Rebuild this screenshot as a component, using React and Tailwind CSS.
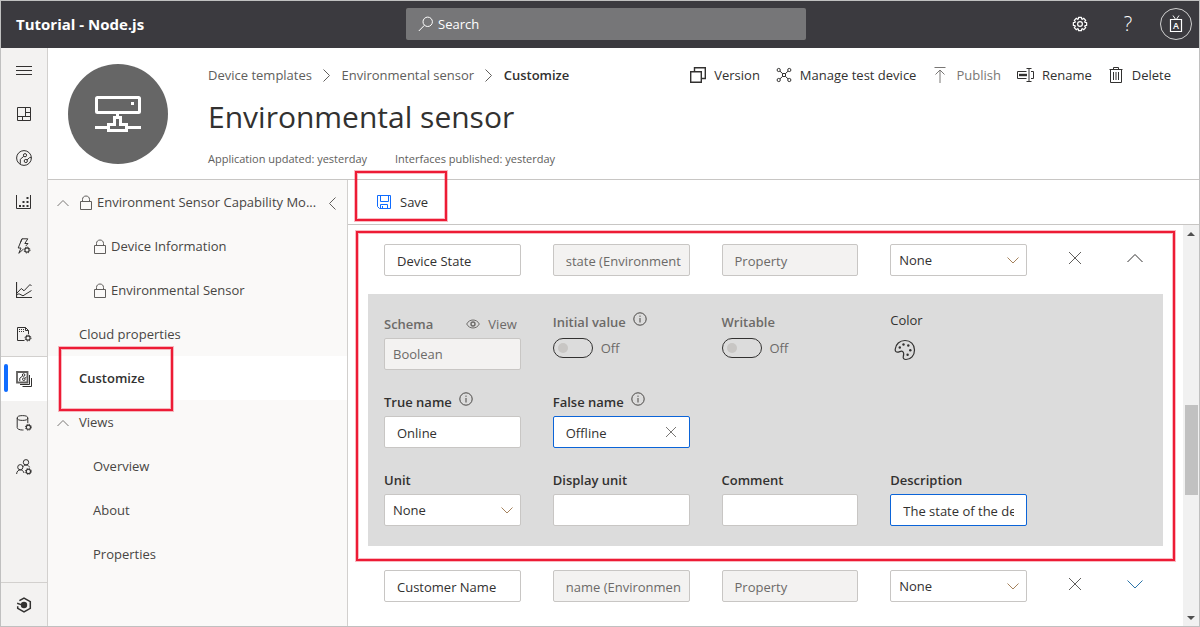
import React from "react";

function Icon({ size = 16, width, className = "", children, sw = 1 }) {
  const w = width || size;
  return (
    <svg
      width={w}
      height={size}
      viewBox={`0 0 ${w} ${size}`}
      fill="none"
      stroke="currentColor"
      strokeWidth={sw}
      className={`shrink-0 ${className}`}
      aria-hidden="true"
    >
      {children}
    </svg>
  );
}

function MiniGear({ x, y }) {
  return (
    <g>
      <circle cx={x} cy={y} r="3" strokeDasharray="1.2 1.156" strokeWidth="1" />
      <circle cx={x} cy={y} r="2.1" strokeWidth="1.1" />
    </g>
  );
}

const MenuIcon = () => (
  <Icon>
    <path d="M0 4.5H16M0 8.5H16M0 12.5H16" />
  </Icon>
);
const DashboardIcon = () => (
  <Icon>
    <path d="M1.5 1.5H14.5V14.5H1.5ZM9.5 1.5V10M1.5 10.5H14.5M10 6.5H14.5M6.5 10.5V14.5" />
  </Icon>
);
const DevicesIcon = () => (
  <Icon>
    <circle cx="8" cy="8" r="7.4" />
    <circle cx="9" cy="5.2" r="1.6" />
    <circle cx="9.8" cy="11" r="1.6" />
    <path d="M7.8 6.3L4.3 9.3V13.8M11 9.9L13.6 7.6H15.2" />
  </Icon>
);
const GroupsIcon = () => (
  <Icon>
    <path d="M0.5 1V14.5H14.5V1" />
    <path
      d="M3 11h2v2h-2zM6.5 11h2v2h-2zM10.5 11h2v2h-2zM6.5 7h2v2h-2zM10.5 7h2v2h-2zM10.5 3h2v2h-2z"
      fill="currentColor"
      stroke="none"
    />
  </Icon>
);
const RulesIcon = () => (
  <Icon>
    <path d="M7.3 11.2L2.8 15.3L5 10H2.2L6 0.8H11.8L8.8 5.5H12L9.8 8M6 0.8L4.2 5.2" />
    <MiniGear x={11} y={12} />
  </Icon>
);
const AnalyticsIcon = () => (
  <Icon>
    <path d="M0.5 0V15.5H16" strokeWidth="1.2" />
    <path d="M1 11L5.3 6.5L8 8.8L14 2.5L15.5 4M1 12.5L3 11.8L7 13.8L15.5 8.5" />
  </Icon>
);
const JobsIcon = () => (
  <Icon>
    <path d="M8.5 14.5H1.5V1.5H9.5L12.5 4.5V8M9.5 1.5V4.5H12.5" />
    <path d="M3 3.5H8M3 5.5H8" strokeDasharray="1 1" />
    <MiniGear x={12} y={12} />
  </Icon>
);
const TemplatesIcon = () => (
  <Icon>
    <path d="M1 1H11.5V11.5H1Z" strokeWidth="1.8" className="text-[#605e5c]" stroke="currentColor" />
    <circle cx="7.6" cy="4" r="1.3" />
    <circle cx="7.8" cy="8.2" r="1.3" />
    <path d="M6.6 5L3.8 7.2V10M8.8 7.3L10.5 6" />
    <path d="M13.5 4V13.5H4M15.5 7V15.5H6.5" />
  </Icon>
);
const ExportIcon = () => (
  <Icon>
    <ellipse cx="6.5" cy="3" rx="5.3" ry="2.4" />
    <path d="M1.2 3V12.6C1.2 14 3.4 15 6.5 15H7.5M11.8 3V8" />
    <MiniGear x={12.4} y={12.2} />
  </Icon>
);
const AdminIcon = () => (
  <Icon>
    <circle cx="10" cy="3.3" r="2.7" />
    <circle cx="4.3" cy="8.2" r="2.6" />
    <path d="M0.6 15C0.8 12.4 2.3 10.9 4.3 10.9C6.3 10.9 7.6 12.2 8 14M6.8 7.8C7.6 6.7 8.7 6 10 6C12 6 13 7 13.6 8.4" />
    <MiniGear x={12.4} y={12.4} />
  </Icon>
);
const CentralIcon = () => (
  <Icon sw={1.5}>
    <circle cx="8" cy="8" r="3.2" fill="currentColor" stroke="none" />
    <path d="M1.7 9.2V11.4L8 15L14.3 11.4V4.6L8 1L3.4 3.6M1.2 6.2L5 7.6" />
  </Icon>
);

function Chevron({ dir = "down", className = "", w = 12 }) {
  const paths = {
    down: `M0.5 0.5L${w / 2} ${w / 2}L${w - 0.5} 0.5`,
    up: `M0.5 ${w / 2}L${w / 2} 0.5L${w - 0.5} ${w / 2}`,
    right: `M0.5 0.5L${w / 2} ${w / 2}L0.5 ${w - 0.5}`,
    left: `M${w / 2} 0.5L0.5 ${w / 2}L${w / 2} ${w - 0.5}`,
  };
  const flat = dir === "down" || dir === "up";
  return (
    <Icon width={flat ? w : w / 2 + 1} size={flat ? w / 2 + 1 : w} className={className}>
      <path d={paths[dir]} />
    </Icon>
  );
}

const LockIcon = () => (
  <Icon width={12} size={16} className="text-[#605e5c]">
    <path d="M0.5 6.5H11.5V14.5H0.5ZM2.5 6.5V4.5C2.5 2.3 4 1 6 1C8 1 9.5 2.3 9.5 4.5V6.5" />
  </Icon>
);
const InfoIcon = () => (
  <Icon size={14} className="text-[#484644]">
    <circle cx="7" cy="7" r="6.2" />
    <path d="M7 6V10.5M7 3.6V4.8" />
  </Icon>
);
const CrossIcon = ({ size = 14, className = "" }) => (
  <Icon size={size} className={className}>
    <path d={`M1 1L${size - 1} ${size - 1}M${size - 1} 1L1 ${size - 1}`} />
  </Icon>
);
const GearIcon = () => {
  const teeth = [];
  const n = 8;
  for (let i = 0; i < n; i++) {
    const a = (i / n) * Math.PI * 2;
    const p = (r, d) => `${(8 + r * Math.cos(a + d)).toFixed(2)} ${(8 + r * Math.sin(a + d)).toFixed(2)}`;
    teeth.push(`${i ? "L" : "M"}${p(6.8, -0.22)}L${p(6.8, 0.22)}L${p(5.3, 0.3)}L${p(5.3, 0.48)}`);
  }
  return (
    <Icon sw={1.2}>
      <path d={teeth.join("") + "Z"} strokeLinejoin="round" />
      <circle cx="8" cy="8" r="2.4" />
    </Icon>
  );
};

const railItems = [
  ["Menu", MenuIcon],
  ["Dashboard", DashboardIcon],
  ["Devices", DevicesIcon],
  ["Device groups", GroupsIcon],
  ["Rules", RulesIcon],
  ["Analytics", AnalyticsIcon],
  ["Jobs", JobsIcon],
  ["Device templates", TemplatesIcon],
  ["Data export", ExportIcon],
  ["Administration", AdminIcon],
];

function TopBar() {
  return (
    <header className="flex h-[47px] shrink-0 items-center bg-[#3b3a3f] pb-px text-white">
      <div className="w-[405px] pl-[15px] text-[15px] font-bold leading-5">Tutorial - Node.js</div>
      <label className="flex h-8 w-[400px] items-center gap-1 rounded-xs bg-[#767678] px-3">
        <Icon size={16}>
          <circle cx="9.7" cy="5.8" r="4.7" />
          <path d="M6.4 9.3L0.8 15" />
        </Icon>
        <input
          aria-label="Search"
          placeholder="Search"
          className="min-w-0 flex-1 bg-transparent text-[13px] leading-5 outline-none placeholder:text-white"
        />
      </label>
      <div className="ml-auto flex items-center pr-[7px]">
        <button aria-label="Settings" className="flex w-12 justify-center">
          <GearIcon />
        </button>
        <button aria-label="Help" className="w-12 text-[20px] font-light leading-6">
          ?
        </button>
        <button
          aria-label="Account"
          className="ml-2 flex size-8 items-center justify-center rounded-full border border-[#d0d0d0]"
        >
          <svg width="14" height="18" viewBox="0 0 14 18" fill="none" stroke="currentColor" aria-hidden="true">
            <path d="M1.5 4.5H12.5V16.5H1.5Z" strokeWidth="1.2" />
            <path d="M4 0.5L7 5L10 0.5" />
            <text
              x="7"
              y="14"
              textAnchor="middle"
              fontSize="9"
              fontWeight="600"
              fill="currentColor"
              stroke="none"
            >
              A
            </text>
          </svg>
        </button>
      </div>
    </header>
  );
}

function Rail() {
  return (
    <nav aria-label="Main" className="flex w-[47px] shrink-0 flex-col border-r border-[#d2d0ce] bg-[#f3f2f1] text-[#323130]">
      {railItems.map(([name, Glyph]) => {
        const on = name === "Device templates";
        return (
          <button
            key={name}
            aria-label={name}
            className={
              on
                ? "relative flex h-[45px] items-center justify-center border-t border-[#d2d0ce] bg-white"
                : "flex h-11 items-center justify-center"
            }
          >
            {on && <span className="absolute left-[3px] top-[7px] h-7 w-1 rounded-sm bg-[#0f6cff]" />}
            <Glyph />
          </button>
        );
      })}
      <button aria-label="IoT Central" className="mt-auto flex h-11 items-center justify-center border-t border-[#d2d0ce]">
        <CentralIcon />
      </button>
    </nav>
  );
}

function Action({ icon, children, muted }) {
  return (
    <button
      disabled={muted}
      className={`flex items-center gap-2 whitespace-nowrap ${muted ? "text-[#797775]" : "text-[#323130]"}`}
    >
      {icon}
      {children}
    </button>
  );
}

function PageHeader() {
  return (
    <div className="flex h-[132px] shrink-0 border-b border-[#c8c6c4] pl-5 pr-7">
      <div className="mt-4 flex size-[100px] shrink-0 items-center justify-center rounded-full bg-[#666666] text-white">
        <svg width="46" height="36" viewBox="0 0 46 36" fill="none" stroke="currentColor" strokeWidth="3" aria-hidden="true">
          <rect x="1.5" y="1.5" width="43" height="15" rx="1" />
          <path d="M36 6h3v3h-3z" fill="currentColor" stroke="none" />
          <path d="M22.5 17V20M13.5 34.5V28.5H19.5V21.5H25.5V28.5H31.5V34.5Z" />
          <path d="M0 31.5H13M32 31.5H46" />
        </svg>
      </div>
      <div className="ml-10 min-w-0 flex-1">
        <div className="mt-[17px] flex items-center justify-between text-[13px] leading-5">
          <div className="flex items-center gap-[11px] whitespace-nowrap text-[#605e5c]">
            <a href="#templates">Device templates</a>
            <Chevron dir="right" w={13} />
            <a href="#sensor">Environmental sensor</a>
            <Chevron dir="right" w={13} />
            <span className="font-semibold text-[#323130]">Customize</span>
          </div>
          <div className="flex items-center gap-4">
            <Action
              icon={
                <Icon sw={1.4}>
                  <path d="M0.7 4.7H11.3V15.3H0.7ZM4.5 4V0.7H15.3V11.5H12" />
                </Icon>
              }
            >
              Version
            </Action>
            <Action
              icon={
                <Icon>
                  <circle cx="2.7" cy="3" r="1.6" />
                  <circle cx="13.3" cy="3" r="1.6" />
                  <circle cx="2.7" cy="13" r="1.6" />
                  <circle cx="13.3" cy="13" r="1.6" />
                  <path d="M4 4.2L6.5 6.5H9.5L12 4.2M4 11.8L6.5 9.5H9.5L12 11.8M6.5 6.5V9.5M9.5 6.5V9.5" />
                </Icon>
              }
            >
              Manage test device
            </Action>
            <Action
              muted
              icon={
                <Icon>
                  <path d="M2.5 0.5H13.5M8 3V16M3.5 7.5L8 3L12.5 7.5" />
                </Icon>
              }
            >
              Publish
            </Action>
            <Action
              icon={
                <Icon width={17}>
                  <path d="M9.5 4.5H0.5V11.5H9.5M14 4.5H16.5V11.5H14" />
                  <path d="M2 8H10" strokeWidth="2.4" />
                  <path d="M9.5 1.5H14.5M9.5 14.5H14.5M12 1.5V14.5" />
                </Icon>
              }
            >
              Rename
            </Action>
            <Action
              icon={
                <Icon>
                  <path d="M1.5 2.5H14.5M5.5 2.5V0.5H10.5V2.5M2.5 2.5V15.5H13.5V2.5" />
                  <path d="M5.5 5V13M8 5V13M10.5 5V13" />
                </Icon>
              }
            >
              Delete
            </Action>
          </div>
        </div>
        <h1 className="mt-3 text-[30px] leading-10 text-[#323130]">Environmental sensor</h1>
        <div className="mt-3 flex gap-7 text-[11px] leading-5 text-[#605e5c]">
          <span>Application updated: yesterday</span>
          <span>Interfaces published: yesterday</span>
        </div>
      </div>
    </div>
  );
}

const redBox = "border-2 border-[#ed1b35] shadow-[0_0_0_1px_rgba(237,27,53,0.3),inset_0_0_0_1px_rgba(237,27,53,0.3)]";

const navRow = "flex h-11 items-center pt-[2px]";

function SideNav() {
  return (
    <nav
      aria-label="Template"
      className="flex w-[300px] shrink-0 flex-col border-r border-[#d2d0ce] bg-[#faf9f8] text-[13px] text-[#484644]"
    >
      <div className={`${navRow} pl-[9px] pr-[11px]`}>
        <Chevron dir="up" className="mr-[11px] text-[#797775]" />
        <a href="#model" className="flex min-w-0 flex-1 items-center gap-[5px]">
          <LockIcon />
          <span className="whitespace-nowrap">Environment Sensor Capability Mo...</span>
        </a>
        <button aria-label="Collapse" className="text-[#605e5c]">
          <Chevron dir="left" w={13} />
        </button>
      </div>
      <a href="#info" className={`${navRow} gap-[5px] pl-[46px]`}>
        <LockIcon />
        Device Information
      </a>
      <a href="#env" className={`${navRow} gap-[5px] pl-[46px]`}>
        <LockIcon />
        Environmental Sensor
      </a>
      <a href="#cloud" className={`${navRow} pl-[31px]`}>
        Cloud properties
      </a>
      <a href="#customize" className={`${navRow} relative bg-white pl-[31px] font-semibold text-[#323130]`}>
        Customize
        <span className={`pointer-events-none absolute -top-[9px] left-[11px] z-10 h-16 w-[114px] ${redBox}`} />
      </a>
      <a href="#views" className={`${navRow} gap-[10px] pl-[9px]`}>
        <Chevron dir="up" className="text-[#797775]" />
        Views
      </a>
      <a href="#overview" className={`${navRow} pl-[45px]`}>
        Overview
      </a>
      <a href="#about" className={`${navRow} pl-[45px]`}>
        About
      </a>
      <a href="#properties" className={`${navRow} pl-[45px]`}>
        Properties
      </a>
    </nav>
  );
}

const cols = "grid grid-cols-[repeat(4,minmax(0,1fr))_32px_24px] gap-x-8";

function TextBox({ active, className = "", ...props }) {
  return (
    <input
      {...props}
      className={`h-8 w-full rounded-xs border pl-3 pt-[2px] text-[13px] outline-none ${
        active ? "border-[#0b64d8]" : "border-[#c8c6c4]"
      } ${props.disabled ? "bg-[#f3f2f1] pr-2 text-[#6c6a68]" : "bg-white pr-3 text-[#323130]"} ${className}`}
    />
  );
}

function SelectBox(props) {
  return (
    <div className="relative">
      <select
        {...props}
        className="h-8 w-full appearance-none rounded-xs border border-[#c8c6c4] bg-white px-2 pt-px text-[13px] text-[#323130] outline-none"
      >
        <option>None</option>
      </select>
      <Chevron className="pointer-events-none absolute right-2 top-[13px] text-[#a5825c]" />
    </div>
  );
}

function FieldRow({ name, id, open }) {
  return (
    <div className={`${cols} px-4`}>
      <TextBox aria-label="Display name" defaultValue={name} />
      <TextBox aria-label="Name" defaultValue={id} disabled />
      <TextBox aria-label="Capability type" defaultValue="Property" disabled />
      <SelectBox aria-label="Semantic type" />
      <button aria-label="Remove" className="flex h-7 items-center justify-center text-[#605e5c]">
        <CrossIcon />
      </button>
      <button
        aria-label={open ? "Collapse" : "Expand"}
        className={`flex h-7 items-center justify-center ${open ? "text-[#323130]" : "text-[#2b74a8]"}`}
      >
        <Chevron dir={open ? "up" : "down"} w={16} />
      </button>
    </div>
  );
}

function Field({ label, htmlFor, info, muted, extra, toggle, children }) {
  return (
    <div className={toggle ? "-mt-[2px] flex flex-col gap-[6px]" : "flex flex-col gap-1"}>
      <div className="flex h-5 gap-[7px]">
        <label
          htmlFor={htmlFor}
          className={`text-[13px] font-semibold leading-5 ${muted ? "text-[#6c6a68]" : "text-[#323130]"}`}
        >
          {label}
        </label>
        {info && <InfoIcon />}
        {extra}
      </div>
      {children}
    </div>
  );
}

function Toggle({ id }) {
  return (
    <div className="flex items-center gap-2 text-[13px] leading-5 text-[#6c6a68]">
      <input
        id={id}
        type="checkbox"
        role="switch"
        disabled
        className="flex h-5 w-10 appearance-none items-center rounded-full border border-[#323130] pl-1 before:size-[10px] before:rounded-full before:bg-[#c8c6c4] before:content-['']"
      />
      Off
    </div>
  );
}

function Details() {
  return (
    <div className={`${cols} mt-[18px] gap-y-[22px] bg-[#dcdcdc] px-4 py-5`}>
      <Field
        label="Schema"
        htmlFor="schema"
        muted
        extra={
          <button className="ml-auto flex items-center gap-2 pr-1 text-[13px] leading-5 text-[#6c6a68]">
            <Icon width={14} size={10}>
              <path d="M0.7 5C2 2.4 4.3 1 7 1C9.7 1 12 2.4 13.3 5C12 7.6 9.7 9 7 9C4.3 9 2 7.6 0.7 5Z" />
              <circle cx="7" cy="5" r="2" strokeWidth="1.4" />
            </Icon>
            View
          </button>
        }
      >
        <input
          id="schema"
          disabled
          defaultValue="Boolean"
          className="h-8 w-full rounded-xs border border-[#c8c6c4] bg-[#f3f2f1] px-2 text-[13px] text-[#6c6a68]"
        />
      </Field>
      <Field label="Initial value" htmlFor="initial" info muted toggle>
        <Toggle id="initial" />
      </Field>
      <Field label="Writable" htmlFor="writable" muted toggle>
        <Toggle id="writable" />
      </Field>
      <div className="-mt-1 flex flex-col gap-[9px] text-[#323130]">
        <span className="text-[13px] leading-5">Color</span>
        <button aria-label="Color" className="ml-1 size-[22px]">
          <svg width="22" height="22" viewBox="0 0 22 22" fill="none" stroke="currentColor" strokeWidth="1.2" aria-hidden="true">
            <path d="M11 1.5C16.5 1.5 20.5 5.4 20.5 11C20.5 16.5 16.8 20.5 12 20.5C9.8 20.5 8.8 19.4 9.3 17.5C9.9 15.4 10.3 13.9 8.8 12.6C7.4 11.4 6.2 12.6 4.4 13.1C2.3 13.6 1 12.4 1.2 10.2C1.7 5.3 5.6 1.5 11 1.5Z" />
            <g fill="currentColor" stroke="none">
              <circle cx="5.8" cy="8.5" r="1.2" />
              <circle cx="9.5" cy="5.5" r="1.2" />
              <circle cx="14.3" cy="6.5" r="1.2" />
              <circle cx="16.3" cy="11.3" r="1.2" />
              <circle cx="13.6" cy="15.8" r="1.2" />
            </g>
          </svg>
        </button>
      </div>
      <div className="col-span-2 col-start-1 grid grid-cols-2 gap-x-8">
        <Field label="True name" htmlFor="true-name" info>
          <TextBox id="true-name" defaultValue="Online" />
        </Field>
        <Field label="False name" htmlFor="false-name" info>
          <div className="relative">
            <TextBox id="false-name" defaultValue="Offline" active />
            <button aria-label="Clear" className="absolute right-[13px] top-[10px] text-[#797775]">
              <CrossIcon size={12} />
            </button>
          </div>
        </Field>
      </div>
      <div className="col-start-1">
        <Field label="Unit" htmlFor="unit">
          <SelectBox id="unit" />
        </Field>
      </div>
      <Field label="Display unit" htmlFor="display-unit">
        <TextBox id="display-unit" />
      </Field>
      <Field label="Comment" htmlFor="comment">
        <TextBox id="comment" />
      </Field>
      <Field label="Description" htmlFor="description">
        <TextBox id="description" defaultValue="The state of the device" active />
      </Field>
    </div>
  );
}

function ScrollTrack() {
  return (
    <div className="flex w-4 shrink-0 flex-col items-center bg-[#f1f1f1] text-[#505050]" aria-hidden="true">
      <svg width="8" height="17" viewBox="0 0 8 17" fill="currentColor">
        <path d="M0 11L4 7L8 11Z" />
      </svg>
      <div className="grow-[163]" />
      <div className="h-[90px] w-[13px] bg-[#c1c1c1]" />
      <div className="grow-[115]" />
      <svg width="8" height="16" viewBox="0 0 8 16" fill="currentColor">
        <path d="M0 6L4 10L8 6Z" />
      </svg>
    </div>
  );
}

export default function App() {
  return (
    <div className="flex h-screen flex-col overflow-hidden border border-[#c0c0c0] bg-white font-['Open_Sans','Noto_Sans',sans-serif]">
      <TopBar />
      <div className="flex min-h-0 flex-1">
        <Rail />
        <main className="flex min-w-0 flex-1 flex-col">
          <PageHeader />
          <div className="flex min-h-0 flex-1">
            <SideNav />
            <section className="flex min-w-0 flex-1 flex-col">
              <div className="relative flex h-[45px] shrink-0 items-center border-b border-[#c8c6c4] pl-[29px]">
                <button className="flex items-center gap-[9px] text-[13px] leading-5 text-[#323130]">
                  <Icon size={14} className="text-[#0f6cff]">
                    <path d="M0.5 0.5H13.5V13.5H2.5L0.5 11.5ZM3.5 0.5V6.5H11.5V0.5M3.5 13.5V9.5H10.5V13.5M5.5 11V13.5" />
                  </Icon>
                  Save
                </button>
                <span className={`pointer-events-none absolute -top-[9px] left-[7px] z-10 h-[50px] w-[92px] ${redBox}`} />
              </div>
              <div className="flex min-h-0 flex-1">
                <div className="min-w-0 flex-1 overflow-hidden px-2 pt-[6px]">
                  <div className={`px-[10px] pb-[13px] pt-[11px] ${redBox}`}>
                    <FieldRow name="Device State" id="state (Environment" open />
                    <Details />
                  </div>
                  <div className="px-3 pt-[9px]">
                    <FieldRow name="Customer Name" id="name (Environmen" />
                  </div>
                </div>
                <ScrollTrack />
              </div>
            </section>
          </div>
        </main>
      </div>
    </div>
  );
}
